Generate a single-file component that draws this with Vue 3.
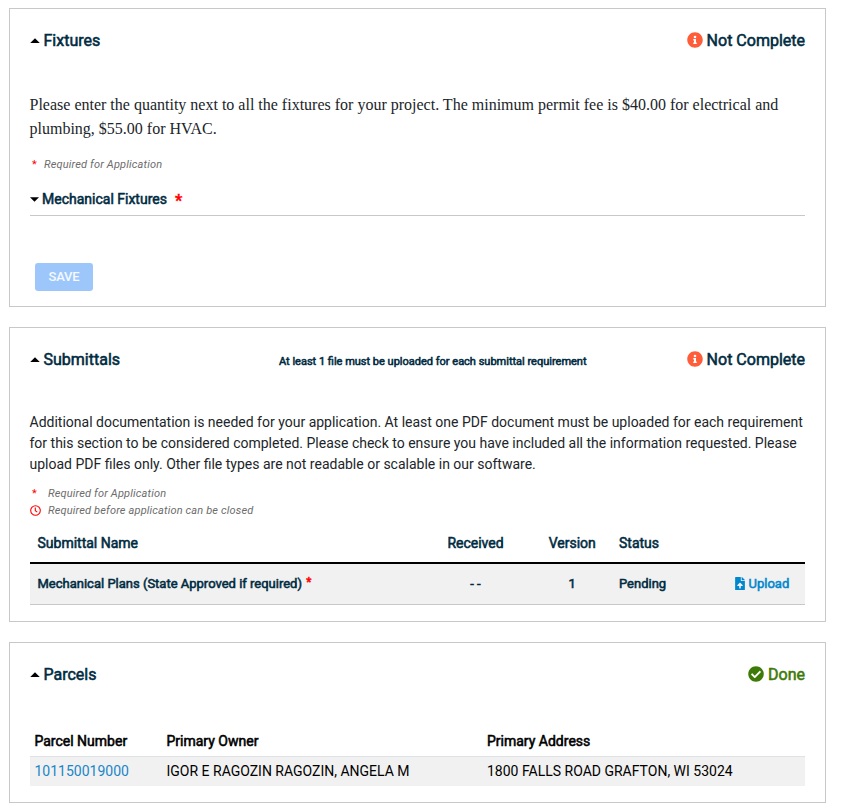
<script setup>
const submittals = [
  { name: 'Mechanical Plans (State Approved if required)', received: '- -', version: 1, status: 'Pending' },
]
const parcels = [
  { number: '101150019000', owner: 'IGOR E RAGOZIN RAGOZIN, ANGELA M', address: '1800 FALLS ROAD GRAFTON, WI 53024' },
]
</script>

<template>
  <main class="page">
    <section class="panel fixtures">
      <header class="head">
        <h2 class="title"><svg class="caret" viewBox="0 0 10 5"><path d="M0 5 5 0l5 5z" /></svg><span class="strong">Fixtures</span></h2>
        <div class="state">
          <svg class="state-icon warn" viewBox="0 0 512 512"><path d="M256 8C119 8 8 119 8 256s111 248 248 248 248-111 248-248S393 8 256 8zm0 110a42 42 0 1 1 0 84 42 42 0 0 1 0-84zm56 254c0 7-5 12-12 12h-88c-7 0-12-5-12-12v-24c0-7 5-12 12-12h12v-64h-12c-7 0-12-5-12-12v-24c0-7 5-12 12-12h64c7 0 12 5 12 12v100h12c7 0 12 5 12 12z" /></svg>
          <span class="strong">Not Complete</span>
        </div>
      </header>
      <p class="intro">Please enter the quantity next to all the fixtures for your project. The minimum permit fee is $40.00 for electrical and plumbing, $55.00 for HVAC.</p>
      <p class="note"><span class="star">*</span><span>Required for Application</span></p>
      <h3 class="group"><svg class="caret small" viewBox="0 0 8 4"><path d="M0 0h8L4 4z" /></svg><span class="strong">Mechanical Fixtures</span><span class="star big">*</span></h3>
      <button class="save" disabled>SAVE</button>
    </section>

    <section class="panel submittals">
      <header class="head three">
        <h2 class="title"><svg class="caret" viewBox="0 0 10 5"><path d="M0 5 5 0l5 5z" /></svg><span class="strong">Submittals</span></h2>
        <div class="hint strong">At least 1 file must be uploaded for each submittal requirement</div>
        <div class="state">
          <svg class="state-icon warn" viewBox="0 0 512 512"><path d="M256 8C119 8 8 119 8 256s111 248 248 248 248-111 248-248S393 8 256 8zm0 110a42 42 0 1 1 0 84 42 42 0 0 1 0-84zm56 254c0 7-5 12-12 12h-88c-7 0-12-5-12-12v-24c0-7 5-12 12-12h12v-64h-12c-7 0-12-5-12-12v-24c0-7 5-12 12-12h64c7 0 12 5 12 12v100h12c7 0 12 5 12 12z" /></svg>
          <span class="strong">Not Complete</span>
        </div>
      </header>
      <p class="body">Additional documentation is needed for your application. At least one PDF document must be uploaded for each requirement for this section to be considered completed. Please check to ensure you have included all the information requested. Please upload PDF files only. Other file types are not readable or scalable in our software.</p>
      <div class="notes">
        <p class="note"><span class="star">*</span><span>Required for Application</span></p>
        <p class="note"><svg class="clock" viewBox="0 0 11 11"><circle cx="5.5" cy="5.5" r="4.8" /><path d="M5.3 2.6v3.1l2 1.4" /></svg><span>Required before application can be closed</span></p>
      </div>
      <div class="sub-row sub-head strong">
        <span>Submittal Name</span><span class="mid">Received</span><span class="mid">Version</span><span>Status</span><span></span>
      </div>
      <div v-for="s in submittals" :key="s.name" class="sub-row sub-item strong">
        <span>{{ s.name }} <span class="star req">*</span></span>
        <span class="mid">{{ s.received }}</span>
        <span class="mid">{{ s.version }}</span>
        <span>{{ s.status }}</span>
        <a class="upload"><svg viewBox="0 0 384 512"><path d="M224 136V0H24C11 0 0 11 0 24v464c0 13 11 24 24 24h336c13 0 24-11 24-24V160H248c-13 0-24-11-24-24zm65 216h-65v80c0 9-7 16-16 16h-32c-9 0-16-7-16-16v-80H95c-14 0-21-17-11-27l96-96c7-6 17-6 24 0l97 96c10 10 2 27-12 27zm88-247L279 7c-4-4-11-7-17-7h-6v128h128v-6c0-6-3-12-7-17z" /></svg><span>Upload</span></a>
      </div>
    </section>

    <section class="panel parcels">
      <header class="head">
        <h2 class="title"><svg class="caret" viewBox="0 0 10 5"><path d="M0 5 5 0l5 5z" /></svg><span class="strong">Parcels</span></h2>
        <div class="state done">
          <svg class="state-icon" viewBox="0 0 512 512"><path d="M504 256c0 137-111 248-248 248S8 393 8 256 119 8 256 8s248 111 248 248zM227 387l184-184c7-6 7-16 0-22l-22-23c-7-6-17-6-23 0L216 308l-70-70c-6-6-16-6-23 0l-22 23c-7 6-7 16 0 22l104 104c6 7 16 7 22 0z" /></svg>
          <span class="strong">Done</span>
        </div>
      </header>
      <div class="parcel-row parcel-head strong"><span>Parcel Number</span><span>Primary Owner</span><span>Primary Address</span></div>
      <div v-for="p in parcels" :key="p.number" class="parcel-row parcel-item"><a>{{ p.number }}</a><span>{{ p.owner }}</span><span>{{ p.address }}</span></div>
    </section>
  </main>
</template>

<style>
body { background: #fff; }
</style>

<style scoped>
.page { box-sizing: border-box; padding: 8px 15px 9px 9px; display: flex; flex-direction: column; gap: 20px; font-family: Roboto, "Liberation Sans", sans-serif; color: #212529; }
.panel { box-sizing: border-box; border: 1px solid #c8c8c8; padding: 0 20px; width: 817px; }
.fixtures { height: 299px; }
.submittals { height: 295px; }
.parcels { height: 161px; }
h2, h3, p { margin: 0; font-weight: 400; }
.strong { -webkit-text-stroke: 0.55px currentColor; }
.head { display: flex; align-items: center; justify-content: space-between; height: 24px; margin-top: 20px; font-size: 16px; line-height: 24px; color: #002b41; }
.three { display: grid; grid-template: 24px / 249px 1fr auto; }
.title { display: flex; align-items: center; font-size: 16px; gap: 4px; }
.caret { width: 10px; height: 5.5px; fill: #000; margin: 0 0 1px -0.5px; }
.caret.small { width: 9px; height: 5px; margin-bottom: 0; }
.state { display: flex; align-items: center; gap: 4px; }
.state-icon { width: 16px; height: 16px; margin-bottom: 2px; fill: #3d7a08; }
.state-icon.warn { fill: #ff5c39; }
.done { color: #3d7a08; }
.hint { font-size: 11px; line-height: 16px; padding-top: 3px; }
.intro { font: 16px/24px "Liberation Serif", serif; margin: 40px 0 0 -0.5px; }
.note { display: flex; align-items: center; font-size: 11px; line-height: 17px; font-style: italic; letter-spacing: 0.16px; color: #6c6c6c; }
.star { color: #f00; font-style: normal; }
.note .star { width: 9px; text-align: center; margin-right: 5px; }
.fixtures .note { margin-top: 15px; }
.group { display: flex; align-items: center; height: 32px; margin-top: 10px; border-bottom: 1px solid #c8c8c8; font-size: 14px; line-height: 20px; gap: 3.5px; color: #002b41; }
.big { font-size: 16px; font-weight: 700; margin-left: 4.5px; padding-top: 4px; -webkit-text-stroke: 0.4px currentColor; }
.save { display: block; margin: 47px 0 0 5px; width: 58px; height: 28px; padding: 0 0 2px; border: 0; border-radius: 3px; background: #9dc7fb; color: #f5f9ff; font: 500 13px Roboto, sans-serif; letter-spacing: -0.2px; }
.body { font-size: 14px; line-height: 21px; margin: 40px -4px 0 -0.5px; }
.notes { margin-top: 10px; }
.notes .star { margin-right: 9px; }
.clock { width: 11px; height: 11px; margin-right: 7px; fill: none; stroke: #f00; stroke-width: 1.1; }
.sub-row { display: grid; grid-template-columns: 389.5px 97px 96.5px 117px 1fr; align-items: center; padding-left: 7.5px; color: #002b41; font-size: 14px; }
.sub-row > :nth-child(4) { margin-left: -1.5px; }
.sub-head { box-sizing: border-box; height: 45px; padding-top: 5px; border-bottom: 2px solid #000; }
.sub-item { box-sizing: border-box; height: 41px; padding-bottom: 2px; background: #f1f1f1; border-bottom: 1px solid #c8c8c8; font-size: 13px; }
.mid { text-align: center; }
.req { margin-left: 1px; font-size: 12px; vertical-align: 2px; line-height: 1; }
.upload { display: flex; align-items: center; gap: 3.5px; margin-left: -2.5px; color: #0087cd; }
.upload svg { width: 10px; height: 13px; fill: currentColor; }
.parcel-row { display: grid; grid-template-columns: 132px 320.5px 1fr; align-items: center; padding-left: 4.5px; font-size: 14px; color: #000; }
.parcel-head { height: 30px; margin-top: 39px; border-bottom: 1px solid #dee2e6; }
.parcel-item { box-sizing: border-box; height: 29px; padding-bottom: 1px; background: #f1f1f1; }
.parcel-item a { color: #1a86c8; }
</style>
